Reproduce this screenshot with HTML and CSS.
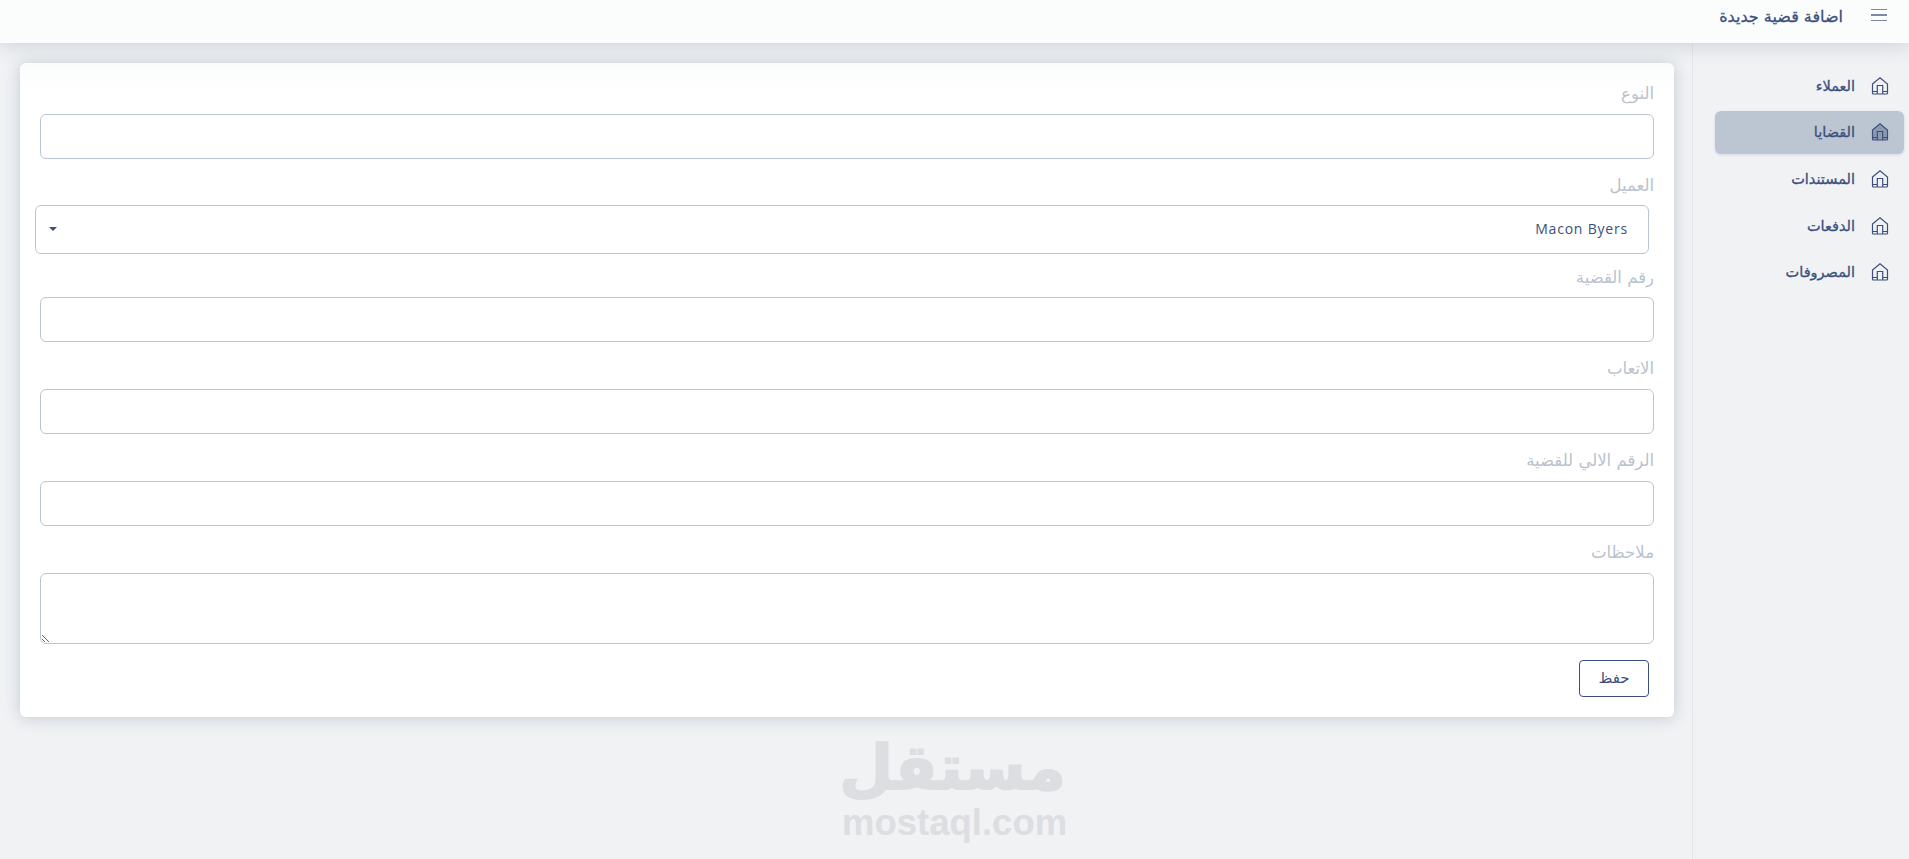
FILE: index.html

```html
<!DOCTYPE html>
<html lang="ar" dir="rtl">
<head>
    <meta charset="utf-8">
    <title>اضافة قضية جديدة</title>
    <link rel="stylesheet" href="styles.css">
</head>
<body>
<!-- top bar -->
<header class="topbar">
    <span class="burger"><i></i><i></i><i></i></span>
    <h1 class="page-title">اضافة قضية جديدة</h1>
</header>

<div class="layout">
    <!-- side menu -->
    <nav class="sidebar">
        <a class="nav-item" href="#">
            <svg class="nav-icon" viewBox="0 0 18 18"><path class="house" d="M1.500 7 9 .8 16.500 7v9a1 1 0 0 1-1 1h-13a1 1 0 0 1-1-1z"/><path d="M6.300 17V8.500h5.400V17M1.500 14.500h4.800M11.700 14.500h4.800"/></svg>
            <span>العملاء</span>
        </a>
        <a class="nav-item active" href="#">
            <svg class="nav-icon" viewBox="0 0 18 18"><path class="house" d="M1.500 7 9 .8 16.500 7v9a1 1 0 0 1-1 1h-13a1 1 0 0 1-1-1z"/><path d="M6.300 17V8.500h5.400V17M1.500 14.500h4.800M11.700 14.500h4.800"/></svg>
            <span>القضايا</span>
        </a>
        <a class="nav-item" href="#">
            <svg class="nav-icon" viewBox="0 0 18 18"><path class="house" d="M1.500 7 9 .8 16.500 7v9a1 1 0 0 1-1 1h-13a1 1 0 0 1-1-1z"/><path d="M6.300 17V8.500h5.400V17M1.500 14.500h4.800M11.700 14.500h4.800"/></svg>
            <span>المستندات</span>
        </a>
        <a class="nav-item" href="#">
            <svg class="nav-icon" viewBox="0 0 18 18"><path class="house" d="M1.500 7 9 .8 16.500 7v9a1 1 0 0 1-1 1h-13a1 1 0 0 1-1-1z"/><path d="M6.300 17V8.500h5.400V17M1.500 14.500h4.800M11.700 14.500h4.800"/></svg>
            <span>الدفعات</span>
        </a>
        <a class="nav-item" href="#">
            <svg class="nav-icon" viewBox="0 0 18 18"><path class="house" d="M1.500 7 9 .8 16.500 7v9a1 1 0 0 1-1 1h-13a1 1 0 0 1-1-1z"/><path d="M6.300 17V8.500h5.400V17M1.500 14.500h4.800M11.700 14.500h4.800"/></svg>
            <span>المصروفات</span>
        </a>
    </nav>

    <main class="content">
        <form class="card">
            <div class="field">
                <label class="field-label">النوع</label>
                <input class="control" type="text">
            </div>
            <div class="field">
                <label class="field-label">العميل</label>
                <div class="select-box">
                    <span>Macon Byers</span>
                    <i class="caret"></i>
                </div>
            </div>
            <div class="field">
                <label class="field-label">رقم القضية</label>
                <input class="control" type="text">
            </div>
            <div class="field">
                <label class="field-label">الاتعاب</label>
                <input class="control" type="text">
            </div>
            <div class="field">
                <label class="field-label">الرقم الالي للقضية</label>
                <input class="control" type="text">
            </div>
            <div class="field">
                <label class="field-label">ملاحظات</label>
                <textarea class="control notes"></textarea>
            </div>
            <button class="save-btn" type="button">حفظ</button>
        </form>
    </main>
</div>

<!-- watermark -->
<div class="watermark">
    <div class="wm-ar">مستقل</div>
    <div class="wm-en" dir="ltr">mostaql.com</div>
</div>
</body>
</html>
```

FILE: styles.css

```css
* {
    box-sizing: border-box;
}
html, body {
    height: 100%;
}
body {
    margin: 0;
    position: relative;
    overflow: hidden;
    background: #f0f2f4;
    color: #3c4f7c;
    font-family: "DejaVu Sans", sans-serif;
}

/* top bar */
.topbar {
    position: relative;
    z-index: 2;
    display: flex;
    align-items: flex-start;
    height: 43px;
    padding: 7px 22px 0 0;
    background: #fbfcfc;
    box-shadow: 0 0 22px rgba(60, 75, 105, .24);
}
.burger {
    display: flex;
    flex-direction: column;
    gap: 4px;
    width: 16px;
    margin: 2px 0 0 28px;
}
.burger i {
    display: block;
    height: 1.4px;
    background: #7d88a6;
}
.page-title {
    margin: 0;
    font-size: 16px;
    font-weight: 400;
    line-height: 20px;
    -webkit-text-stroke: .3px #3c4f7c;
}

/* layout */
.layout {
    display: flex;
    height: calc(100% - 43px);
}
.sidebar {
    flex: 0 0 217px;
    padding: 21px 5px 0 22px;
    border-left: 1px solid #e2e5ea;
}
.nav-item {
    display: flex;
    align-items: center;
    gap: 16px;
    height: 43px;
    margin-bottom: 3.7px;
    padding-right: 15px;
    border-radius: 6px;
    color: #3c4f7c;
    font-size: 14.5px;
    text-decoration: none;
    -webkit-text-stroke: .3px #3c4f7c;
}
.nav-item.active {
    background: #bcc6d2;
    box-shadow: 0 1px 3px rgba(60, 75, 105, .15);
}
.nav-icon {
    flex: none;
    width: 18px;
    height: 18px;
    fill: none;
    stroke: #3c4f7c;
    stroke-width: 1.2;
}
.active .house {
    fill: #8d9ab4;
}

/* card + form */
.content {
    flex: 1;
    padding: 20px 18px 0 20px;
}
.card {
    padding: 4px 20px 20px;
    border-radius: 6px;
    background: linear-gradient(#fbfcfc, #fff 30px);
    box-shadow: 0 1px 16px rgba(60, 75, 105, .24);
    overflow: hidden;
}
.field-label {
    display: block;
    height: 46.75px;
    padding-top: 15px;
    color: #b9c2ce;
    font-size: 16.5px;
    line-height: 24px;
}
.control {
    display: block;
    width: 100%;
    height: 45px;
    border: 1px solid #b8c5d4;
    border-radius: 6px;
    background: #fff;
    outline: none;
}
.notes {
    height: 71px;
}
.select-box {
    display: flex;
    align-items: center;
    justify-content: space-between;
    height: 49.2px;
    margin: -.5px 5px -3.7px -5px;
    padding: 0 20px 2px 13px;
    border: 1px solid #b8c5d4;
    border-radius: 6px;
    font-family: "Open Sans", sans-serif;
    font-size: 14px;
    letter-spacing: .8px;
}
.caret {
    width: 0;
    height: 0;
    border-top: 4px solid #3c4f7c;
    border-left: 4px solid transparent;
    border-right: 4px solid transparent;
}
.save-btn {
    display: block;
    width: 70px;
    height: 37px;
    margin: 16px 5px 0 0;
    border: 1px solid #3c4f7c;
    border-radius: 4px;
    background: #fff;
    color: #3c4f7c;
    font-family: "DejaVu Sans", sans-serif;
    font-size: 15px;
}

/* watermark */
.watermark {
    position: absolute;
    left: 842px;
    top: 731px;
    width: 224px;
    color: #dcdee1;
    text-align: center;
}
.wm-ar {
    height: 74px;
    font-size: 62px;
    font-weight: 700;
    line-height: 74px;
    -webkit-text-stroke: 2px #dcdee1;
}
.wm-en {
    font-family: "Liberation Sans", sans-serif;
    font-size: 36.5px;
    font-weight: 700;
    line-height: 36px;
}
```
